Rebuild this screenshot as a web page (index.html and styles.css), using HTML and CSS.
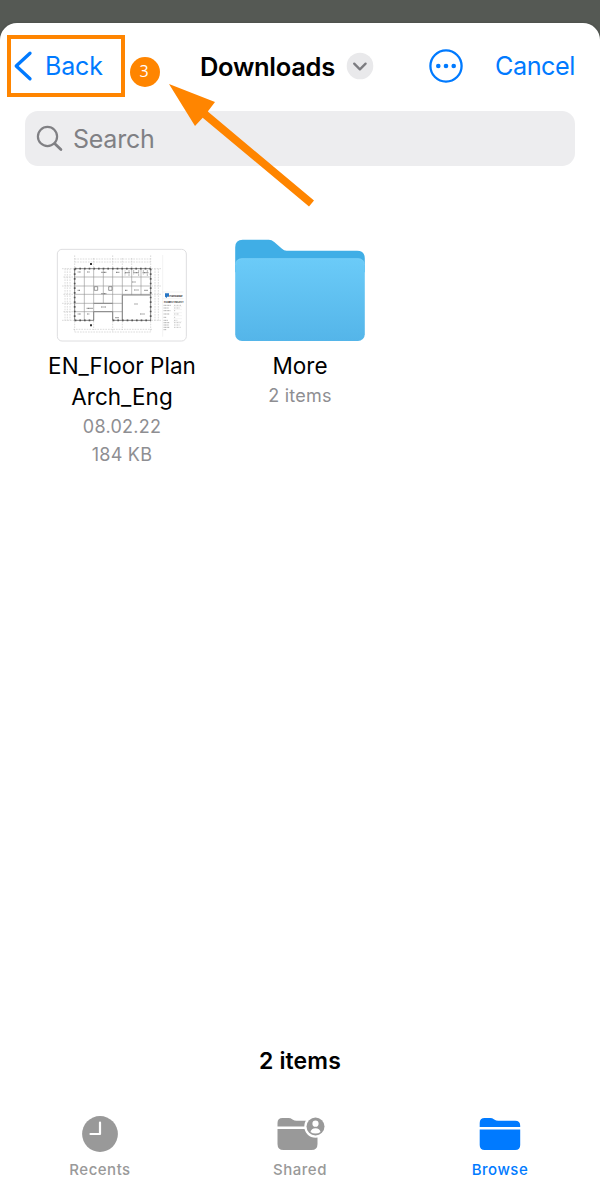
FILE: index.html
```html
<!DOCTYPE html>
<html lang="en">
<head>
<meta charset="utf-8">
<title>Downloads</title>
<link rel="stylesheet" href="styles.css">
</head>
<body>
<main class="sheet">
  <header class="header">
    <div class="back">
      <svg width="20" height="32" viewBox="0 0 20 32"><path d="M17 3.200 3.200 16 17 28.800" fill="none" stroke="#007aff" stroke-width="3.300" stroke-linecap="round" stroke-linejoin="round"/></svg>
      <span class="back-label">Back</span>
    </div>
    <div class="step"><span>3</span></div>
    <h1 class="title">Downloads</h1>
    <svg class="chevron" width="28" height="28" viewBox="0 0 28 28"><circle cx="14" cy="14" r="13.300" fill="#e9e9eb"/><path d="m8.200 11.600 5.700 5.800 5.700-5.800" fill="none" stroke="#7c7c80" stroke-width="2.300" stroke-linecap="round" stroke-linejoin="round"/></svg>
    <svg class="options" width="36" height="36" viewBox="0 0 36 36"><circle cx="18" cy="18" r="15.600" fill="none" stroke="#007aff" stroke-width="2.300"/><g fill="#007aff"><circle cx="10.300" cy="18" r="2.300"/><circle cx="18" cy="18" r="2.300"/><circle cx="25.700" cy="18" r="2.300"/></g></svg>
    <span class="cancel">Cancel</span>
  </header>

  <div class="search">
    <svg width="28" height="28" viewBox="0 0 28 28" fill="none" stroke="#808084" stroke-linecap="round"><circle cx="11.500" cy="11.500" r="9.600" stroke-width="2.200"/><path d="m18.600 18.600 6.300 6" stroke-width="2.800"/></svg>
    <span class="search-label">Search</span>
  </div>

  <section class="files">
    <article class="file">
      <svg class="thumb" width="132" height="95" viewBox="18 24 396 285">
        <rect x="22" y="28" width="387" height="275" rx="14" fill="#fff" stroke="#dedee0" stroke-width="3"/>
        <g fill="none" stroke="#b9b9b9" stroke-width="1.500" stroke-dasharray="5 3">
          <path d="M74 46V84M131 54V84M188 46V84M217 54V84M245 54V84M302 46V84M74 243V276M131 243V270M188 243V276M217 243V270M302 243V276"/>
          <path d="M74 57H302M74 66H302M70 268H306M74 276H302M45 86V242M52 86V242M60 86V242M315 86V242M325 86V242"/>
          <path d="M36 86H72M40 111H72M36 138H72M40 163H72M36 190H72M40 215H72M36 241H72M304 86H333M304 138H333M304 163H333M304 241H333"/>
        </g>
        <g fill="none" stroke="#929292" stroke-width="1.800">
          <path d="M103 86V241M131 86V241M160 86V190M188 86V241M217 86V241M245 86V165M273 86V165M74 111H302M74 138H302M74 163H302M74 190H217M74 215H217"/>
        </g>
        <path d="M74 86H302V241H188V215H131V241H74ZM217 165H302M217 165V241M131 190H188" fill="none" stroke="#858585" stroke-width="3"/>
        <path d="M74 86H302M74 241H131M188 241H302M74 86V241M302 86V241" fill="none" stroke="#555" stroke-width="5" stroke-dasharray="5 9"/>
        <g fill="#fff" stroke="#666" stroke-width="2"><path d="M133 140h10v11h-10zM176 140h10v11h-10z"/></g>
        <path d="M83 96h10M111 96h9M154 97h15M198 97h10M83 151h8M225 151h8M252 150h14M283 151h10M154 161h15M83 222h10M111 222h8M153 201h15M196 233h10M110 205h18M246 126h12M253 192h10M270 222h14M225 98h14M250 98h17M278 98h17" stroke="#858585" stroke-width="3.500" stroke-dasharray="3 1"/>
        <path d="M225 92v14M237 90v18M251 90v13M266 90v18M280 90v13M292 90v18" stroke="#999" stroke-width="3" stroke-dasharray="2 2"/>
        <path d="M120 69h6v6h-6zM120 253h6v6h-6z" fill="#333"/>
        <path d="M338 45V290M338 156H400M338 176H400" fill="none" stroke="#e6e6e6" stroke-width="1.500"/>
        <path d="M345 160h12v10h-6v4l-6-4z" fill="#2675c5"/>
        <text class="plan-brand" x="358" y="170">PlanRadar</text>
        <text class="plan-title" x="342" y="188">EXAMPLE PROJECT</text>
        <g stroke="#929292" stroke-width="2.500" stroke-dasharray="3 1.500"><path d="M341 196h22M341 204h15M341 212h20M341 222h17M341 232h9M341 241h13M341 248h17M341 255h15M341 262h17M341 269h8"/><path d="M372 196h21M372 204h18M372 212h5M372 222h15M372 232h5M372 241h10M372 248h20M372 255h17M372 262h20" stroke="#bbb"/></g>
        <path d="M370 200h26M370 208h26M370 218h26M370 227h26M370 236h26M370 245h26" stroke="#ddd"/>
      </svg>
      <h2 class="name"><span class="line-one">EN_Floor Plan</span><br><span class="line-two">Arch_Eng</span></h2>
      <p class="meta"><span class="date">08.02.22</span><br><span class="size">184 KB</span></p>
    </article>
    <article class="file">
      <svg class="thumb" width="132" height="104" viewBox="0 0.700 132 104">
        <defs><linearGradient id="folder" x1="0" y1="0" x2="0" y2="1"><stop stop-color="#6bcbf8"/><stop offset="1" stop-color="#54b5e9"/></linearGradient></defs>
        <path d="M1.200 28V9q0-7.500 7.500-7.500h26q3 0 5.500 2.200L48 10.500q2 1.900 4.500 1.900H123q7.800 0 7.800 7.800V34H1.200Z" fill="#40aee6"/>
        <rect x="1.200" y="20" width="129.600" height="82.800" rx="6.800" fill="url(#folder)"/>
        <path d="M1.700 26.800q0-6.300 6.300-6.300h116q6.300 0 6.300 6.300" fill="none" stroke="#83d2f7" stroke-width=".5"/>
      </svg>
      <h2 class="name"><span class="more">More</span></h2>
      <p class="meta count">2 items</p>
    </article>
  </section>

  <p class="summary"><span>2 items</span></p>

  <nav class="tabs">
    <div class="tab">
      <svg width="52" height="38" viewBox="0 0 52 38"><circle cx="26" cy="19" r="17.900" fill="#999"/><path d="M26 7.500V19H16.500" fill="none" stroke="#fff" stroke-width="2.200" stroke-linecap="round" stroke-linejoin="round"/></svg>
      <span class="recents">Recents</span>
    </div>
    <div class="tab">
      <svg width="52" height="38" viewBox="0 0 52 38"><path d="M3.500 11.500V8q0-5 5-5h6q2 0 4 1.400t4 1.400h17q4 0 4 4v1.700ZM3.500 14h40v15q0 6-6 6h-28q-6 0-6-6Z" fill="#999"/><circle cx="41.500" cy="11.500" r="11.200" fill="#fff"/><circle cx="41.500" cy="11.500" r="9" fill="#999"/><circle cx="41.500" cy="8.700" r="3.100" fill="#fff"/><path d="M36.500 17q.7-3.800 5-3.800t5 3.800q-2 1.600-5 1.600t-5-1.600" fill="#fff"/></svg>
      <span class="shared">Shared</span>
    </div>
    <div class="tab active">
      <svg width="52" height="38" viewBox="0 0 52 38"><path d="M5.700 12V8q0-5 5-5h5.500q2 0 4 1.400t4 1.400h17q5 0 5 5V12ZM5.700 14.500h40.500V30q0 5-5 5H10.700q-5 0-5-5Z" fill="#007aff"/></svg>
      <span class="browse">Browse</span>
    </div>
  </nav>
</main>

<div class="highlight"></div>
<svg class="arrow" width="150" height="126" viewBox="0 0 150 126"><path d="M1 1 47 19 39.800 28.600 146 117.500 141 123.500 34.700 34.700 27 43Z" fill="#ff8500"/></svg>
</body>
</html>
```

FILE: styles.css
```css
* { box-sizing: border-box; }

body {
  margin: 0;
  height: 1199px;
  padding-top: 23px;
  background: #555954;
  color: #000;
  font-family: Inter, "Liberation Sans", sans-serif;
  position: relative;
  overflow: hidden;
}

h1, h2, p { margin: 0; }
svg { display: block; flex: none; }

.sheet {
  height: 1176px;
  background: #fff;
  border-radius: 17px 17px 0 0;
  box-shadow: 0 0 3px #454844;
  display: flex;
  flex-direction: column;
}

.header {
  height: 88px;
  padding: 0 0 2px 13px;
  display: flex;
  align-items: center;
  flex: none;
  white-space: nowrap;
}

.back {
  display: flex;
  align-items: center;
  width: 117px;
  gap: 12px;
  color: #007aff;
  font-size: 25px;
}

.back-label { letter-spacing: -0.15px; }

.step {
  width: 30px;
  height: 30px;
  border-radius: 50%;
  margin-top: 11px;
  background: #ff8500;
  color: #fff;
  display: grid;
  place-items: center;
  font: 16px "Open Sans", sans-serif;
}

.step span { margin: -1px 2px 0 0; }

.title {
  width: 146px;
  margin-left: 40px;
  font-size: 25.5px;
  font-weight: 600;
  letter-spacing: -0.3px;
}

.options { margin-left: 54px; }
.cancel { margin-left: 31px; color: #007aff; font-size: 25.2px; letter-spacing: -0.45px; }

.search {
  height: 55px;
  margin: 0 25px;
  padding-left: 11px;
  display: flex;
  align-items: center;
  gap: 9px;
  border-radius: 13px;
  background: #ededef;
  color: #808084;
  font-size: 25px;
  letter-spacing: -0.25px;
  flex: none;
}

.files {
  display: grid;
  grid-template-columns: 178px 178px;
  padding: 73px 0 0 33px;
  flex: 1;
}

.file {
  display: grid;
  grid-template-rows: 104px auto auto;
  align-content: start;
  justify-items: center;
  text-align: center;
}

.thumb { align-self: end; }

.name {
  margin-top: 7px;
  font-size: 22.5px;
  line-height: 31px;
  font-weight: 400;
  white-space: nowrap;
}

.meta {
  padding-top: 1px;
  color: #8e8e92;
  font-size: 18px;
  letter-spacing: .25px;
  line-height: 28px;
}

.summary {
  text-align: center;
  font-size: 23px;
  font-weight: 600;
  letter-spacing: .15px;
  line-height: 30px;
  margin-bottom: 39px;
}

.tabs {
  display: grid;
  grid-template-columns: repeat(3, 1fr);
  height: 84px;
  flex: none;
}

.tab {
  display: flex;
  flex-direction: column;
  align-items: center;
  color: #999;
  font-size: 15px;
  font-weight: 500;
  line-height: 20px;
  gap: 7px;
  letter-spacing: .5px;
}

.active { color: #007aff; }

.plan-brand { font: 700 8px Inter, sans-serif; fill: #333; }
.plan-title { font: 700 6px Inter, sans-serif; fill: #222; }

.highlight {
  position: absolute;
  left: 7px;
  top: 35px;
  width: 118px;
  height: 62px;
  border: 4px solid #ff8500;
}

.arrow {
  position: absolute;
  left: 168px;
  top: 83px;
}
```
